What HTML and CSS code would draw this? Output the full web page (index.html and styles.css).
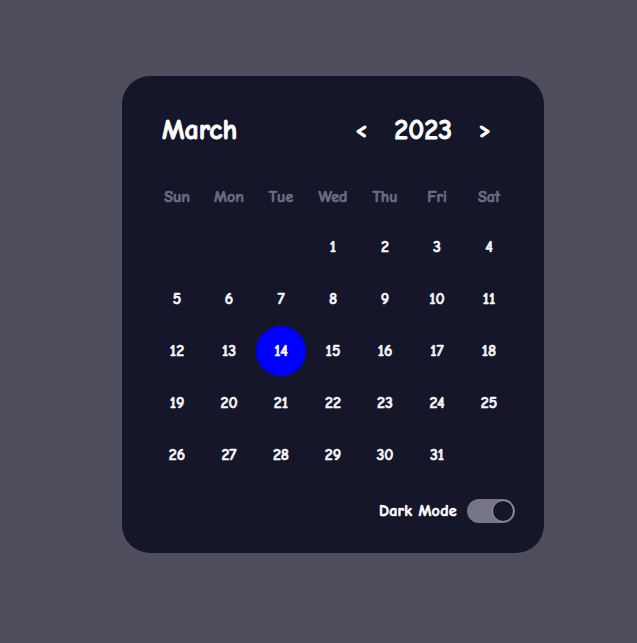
FILE: index.html
```html
<!DOCTYPE html>
<html>
<head>
<meta charset="utf-8">
<link rel="stylesheet" href="styles.css">
</head>
<body>
<div class="card">
  <div class="header">
    <div class="month">March</div>
    <div class="year-nav">
      <span class="arrow">&lt;</span>
      <span class="year">2023</span>
      <span class="arrow">&gt;</span>
    </div>
  </div>
  <div class="grid">
    <div class="dn">Sun</div><div class="dn">Mon</div><div class="dn">Tue</div><div class="dn">Wed</div><div class="dn">Thu</div><div class="dn">Fri</div><div class="dn">Sat</div>
    <div></div><div></div><div></div><div class="d">1</div><div class="d">2</div><div class="d">3</div><div class="d">4</div>
    <div class="d">5</div><div class="d">6</div><div class="d">7</div><div class="d">8</div><div class="d">9</div><div class="d">10</div><div class="d">11</div>
    <div class="d">12</div><div class="d">13</div><div class="d sel"><span>14</span></div><div class="d">15</div><div class="d">16</div><div class="d">17</div><div class="d">18</div>
    <div class="d">19</div><div class="d">20</div><div class="d">21</div><div class="d">22</div><div class="d">23</div><div class="d">24</div><div class="d">25</div>
    <div class="d">26</div><div class="d">27</div><div class="d">28</div><div class="d">29</div><div class="d">30</div><div class="d">31</div><div></div>
  </div>
  <div class="footer">
    <span class="label">Dark Mode</span>
    <span class="toggle"><span class="knob"></span></span>
  </div>
</div>
</body>
</html>
```
FILE: styles.css
```css
html, body {
  margin: 0;
  padding: 0;
  background: #4f4e5c;
  height: 100%;
}
body {
  font-family: "Comic Sans MS", "Comic Neue", cursive;
  color: #ffffff;
  padding: 76px 0 0 122px;
  box-sizing: border-box;
  -webkit-text-stroke: 0.6px currentColor;
}
.card {
  width: 422px;
  height: 477px;
  box-sizing: border-box;
  background: #151629;
  border-radius: 28px;
  padding: 37px 29px 30px;
  display: flex;
  flex-direction: column;
}
.header {
  height: 36px;
  padding: 0 11px;
  display: flex;
  align-items: center;
  justify-content: space-between;
  margin-bottom: 22px;
}
.month, .year {
  font-size: 28px;
  font-weight: bold;
}
.month {
  -webkit-text-stroke: 0.9px currentColor;
}
.year {
  -webkit-text-stroke: 0.8px currentColor;
}
.year-nav {
  display: flex;
  align-items: center;
  gap: 14px;
}
.arrow {
  width: 38px;
  text-align: center;
  font-size: 22px;
  font-weight: bold;
  -webkit-text-stroke: 1px currentColor;
}
.grid {
  display: grid;
  grid-template-columns: repeat(7, 52px);
  grid-auto-rows: 52px;
}
.grid > div {
  display: flex;
  align-items: center;
  justify-content: center;
  font-weight: bold;
}
.dn {
  color: #6b6a85;
  font-size: 16px;
  padding-top: 3px;
  box-sizing: border-box;
  -webkit-text-stroke: 0.7px currentColor;
}
.d {
  font-size: 16px;
  color: #f4f4f8;
}
.sel span {
  width: 50px;
  height: 50px;
  border-radius: 50%;
  background: #0000ff;
  display: flex;
  align-items: center;
  justify-content: center;
}
.footer {
  margin-top: 18px;
  display: flex;
  justify-content: flex-end;
  align-items: center;
  gap: 10px;
  height: 24px;
}
.label {
  font-size: 16px;
  font-weight: bold;
  letter-spacing: 0.3px;
}
.toggle {
  width: 48px;
  height: 24px;
  box-sizing: border-box;
  border-radius: 12px;
  background: #76758a;
  display: flex;
  align-items: center;
  justify-content: flex-end;
  padding: 1px;
  -webkit-text-stroke: 0;
}
.knob {
  width: 22px;
  height: 22px;
  box-sizing: border-box;
  border-radius: 50%;
  background: #151629;
  border: 1px solid #9a99ac;
}
```
